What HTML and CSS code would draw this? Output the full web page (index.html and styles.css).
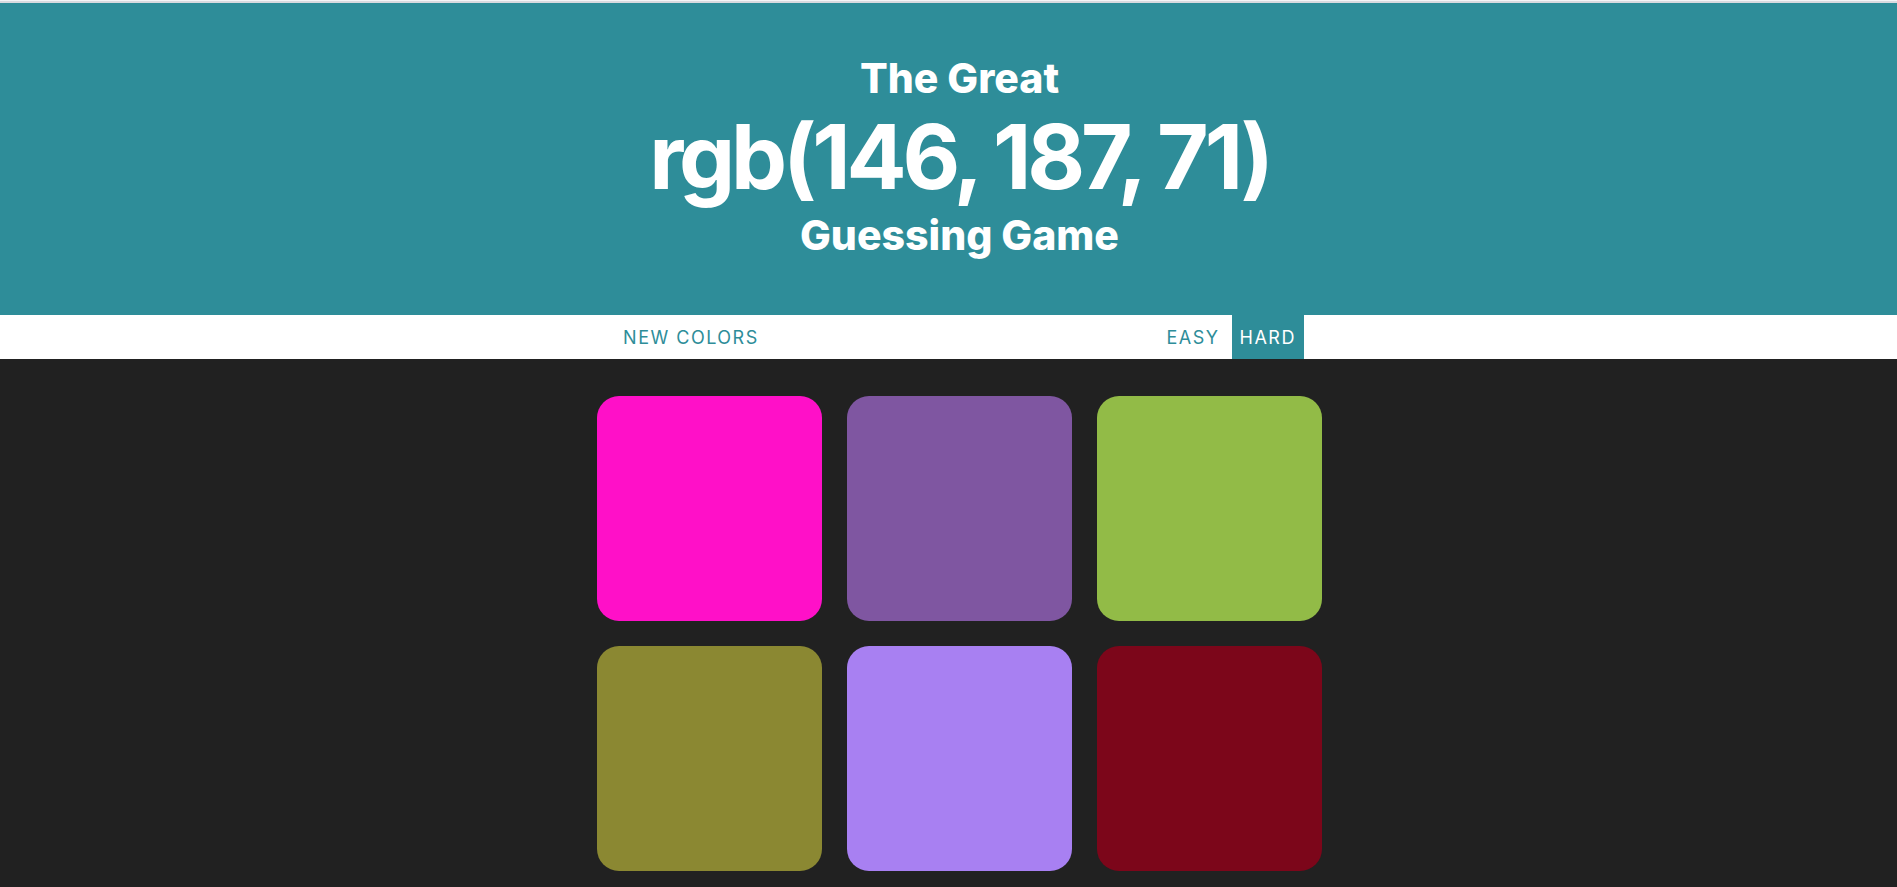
FILE: index.html
```html
<!DOCTYPE html>
<html lang="en">
<head>
<meta charset="utf-8">
<title>Colour Game</title>
<link rel="stylesheet" href="styles.css">
</head>
<body>
<div class="page">
  <div class="topline"></div>
  <header class="hero">
    <h1 class="title">
      <span class="title-small">The Great</span>
      <span class="title-big">rgb(146, 187, 71)</span>
      <span class="title-small">Guessing Game</span>
    </h1>
  </header>
  <nav class="stripe">
    <button class="btn">New Colors</button>
    <span class="message"></span>
    <button class="btn">Easy</button>
    <button class="btn selected">Hard</button>
  </nav>
  <main class="board">
    <div class="square sq-pink"></div>
    <div class="square sq-purple"></div>
    <div class="square sq-green"></div>
    <div class="square sq-olive"></div>
    <div class="square sq-lavender"></div>
    <div class="square sq-maroon"></div>
  </main>
</div>
</body>
</html>
```

FILE: styles.css
```css
html, body {
  margin: 0;
  padding: 0;
  overflow: hidden;
  background: #212121;
}

body {
  font-family: Inter, "Noto Sans", sans-serif;
}

.page {
  width: 1919px;
  height: 887px;
  background: #212121;
}

.topline {
  height: 3px;
  background: linear-gradient(#f4f4f6 0 1px, #d9dadf 1px 3px);
}

.hero {
  background: #2e8d99;
  padding: 50px 0 55px;
  text-align: center;
  color: #ffffff;
}

.title {
  margin: 0;
  font-weight: 700;
  line-height: normal;
}

.title-small {
  display: block;
  font-size: 41px;
  font-weight: 800;
  letter-spacing: 0;
}

.title-big {
  display: block;
  font-size: 89px;
  font-weight: 700;
  letter-spacing: -4.2px;
}

.stripe {
  height: 44px;
  background: #ffffff;
  display: flex;
  justify-content: center;
  align-items: stretch;
  gap: 4px;
}

.message {
  width: 20%;
}

.btn {
  border: none;
  background: none;
  margin: 0;
  padding: 0 8px;
  font-family: Inter, "Noto Sans", sans-serif;
  font-size: 18px;
  font-weight: 400;
  text-transform: uppercase;
  letter-spacing: 1.5px;
  color: #2e8d99;
}

.btn.selected {
  background: #2e8d99;
  color: #ffffff;
}

.board {
  width: 725px;
  margin: 37px auto 0;
  display: grid;
  grid-template-columns: repeat(3, 225px);
  gap: 25px;
}

.square {
  height: 225px;
  border-radius: 22px;
}

.sq-pink { background: rgb(255, 16, 200); }
.sq-purple { background: rgb(127, 86, 161); }
.sq-green { background: rgb(146, 187, 71); }
.sq-olive { background: rgb(139, 136, 50); }
.sq-lavender { background: rgb(168, 128, 242); }
.sq-maroon { background: rgb(124, 6, 26); }
```
